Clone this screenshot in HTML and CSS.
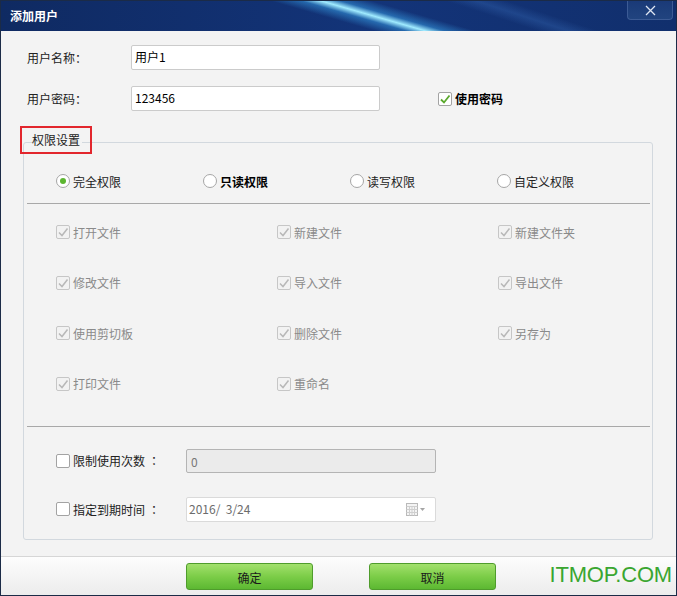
FILE: index.html
```html
<!DOCTYPE html>
<html lang="zh-CN">
<head>
    <meta charset="UTF-8">
    <title>添加用户</title>
    <link rel="stylesheet" href="styles.css">
</head>
<body>
    <div class="window">
        <div class="titlebar">
            <span class="title">添加用户</span>
            <button class="close-btn" aria-label="关闭">
                <svg width="11" height="11" viewBox="0 0 11 11"><path d="M1 1 L10 10 M10 1 L1 10" stroke="#dfe6f2" stroke-width="1.3" fill="none"/></svg>
            </button>
        </div>

        <div class="dialog-body">
            <div class="field-row">
                <span class="field-label">用户名称<span class="colon">：</span></span>
                <input class="text-input" type="text" value="用户1" readonly>
            </div>
            <div class="field-row">
                <span class="field-label">用户密码<span class="colon">：</span></span>
                <input class="text-input" type="text" value="123456" readonly>
                <label class="check check-strong use-pwd">
                    <span class="box"><svg width="12" height="12" viewBox="0 0 12 12"><path d="M2 6.5 L5 9.5 L10.5 2.5" stroke="#5aa92c" stroke-width="1.8" fill="none"/></svg></span>使用密码
                </label>
            </div>

            <div class="groupbox">
                <div class="group-title"><span>权限设置</span></div>

                <div class="radio-row">
                    <label class="radio"><span class="dot on"></span>完全权限</label>
                    <label class="radio radio-strong"><span class="dot"></span>只读权限</label>
                    <label class="radio"><span class="dot"></span>读写权限</label>
                    <label class="radio"><span class="dot"></span>自定义权限</label>
                </div>

                <div class="divider"></div>

                <div class="perm-grid" id="perm-grid"></div>

                <div class="divider divider-low"></div>

                <div class="limit-rows">
                    <div class="limit-row">
                        <label class="check limit-check"><span class="box"></span>限制使用次数<span class="colon">：</span></label>
                        <div class="text-box disabled-box">0</div>
                    </div>
                    <div class="limit-row limit-row-date">
                        <label class="check limit-check"><span class="box"></span>指定到期时间<span class="colon">：</span></label>
                        <div class="text-box date-box">
                            <span class="date-text">2016/  3/24</span>
                            <span class="date-picker">
                                <svg width="20" height="14" viewBox="0 0 20 14">
                                    <rect x="0.5" y="0.5" width="11" height="12" fill="#f4f4f4" stroke="#b9b9b9"/>
                                    <path d="M0.5 3.5 H11.5 M3.5 3.5 V12.5 M6 3.5 V12.5 M8.5 3.5 V12.5 M0.5 6.5 H11.5 M0.5 9.5 H11.5" stroke="#cfcfcf" stroke-width="1" fill="none"/>
                                    <path d="M14 5 H19 L16.5 8 Z" fill="#a5a5a5"/>
                                </svg>
                            </span>
                        </div>
                    </div>
                </div>
            </div>
        </div>

        <div class="footer">
            <button class="green-btn">确定</button>
            <button class="green-btn btn-cancel">取消</button>
            <span class="watermark">ITMOP.COM</span>
        </div>
    </div>

    <script>
        // permission checkboxes, all ticked and greyed out
        const perms = [
            '打开文件', '新建文件', '新建文件夹',
            '修改文件', '导入文件', '导出文件',
            '使用剪切板', '删除文件', '另存为',
            '打印文件', '重命名'
        ];

        const tick = '<svg width="12" height="12" viewBox="0 0 12 12"><path d="M2 6.5 L5 9.5 L10.5 2.5" stroke="#b8b8b8" stroke-width="1.5" fill="none"/></svg>';

        document.getElementById('perm-grid').innerHTML = perms.map(p => `
            <label class="check disabled"><span class="box">${tick}</span>${p}</label>
        `).join('');
    </script>
</body>
</html>
```

FILE: styles.css
```css
* {
    margin: 0;
    padding: 0;
    box-sizing: border-box;
}

body {
    font-family: "Noto Sans CJK SC", "Liberation Sans", sans-serif;
    font-size: 12px;
    color: #222;
    background: #fff;
}

.window {
    width: 677px;
    height: 596px;
    border: 1px solid #1b2b47;
    display: flex;
    flex-direction: column;
    background: #f3f3f3;
    overflow: hidden;
}

/* title bar */
.titlebar {
    height: 30px;
    flex-shrink: 0;
    display: flex;
    justify-content: space-between;
    align-items: flex-start;
    background:
        linear-gradient(16deg, transparent 48%, rgba(60, 170, 240, 0.45) 52%, rgba(160, 235, 255, 1) 54.5%, rgba(60, 170, 240, 0.45) 57%, transparent 61%),
        linear-gradient(18deg, transparent 70%, rgba(70, 130, 210, 0.25) 74%, transparent 78%),
        linear-gradient(to right, #0f2a62, #133479 55%, #112f6d);
}

.title {
    color: #fff;
    font-weight: bold;
    font-size: 12px;
    line-height: 30px;
    padding-left: 9px;
}

.close-btn {
    width: 46px;
    height: 19px;
    margin-right: 3px;
    border: 1px solid #3c5b95;
    border-top: none;
    border-radius: 0 0 4px 4px;
    background: linear-gradient(#1a3a78, #21447f);
    display: flex;
    align-items: center;
    justify-content: center;
}

/* body */
.dialog-body {
    flex: 1;
    padding: 14px 0 0 22px;
}

.field-row {
    display: flex;
    align-items: center;
    height: 25px;
    padding-left: 4px;
    margin-bottom: 16px;
}

.field-label {
    width: 104px;
    color: #222;
}

/* centred full-width colon, like the Windows font */
.colon {
    font-family: "Noto Sans CJK TC", "Noto Sans CJK SC", sans-serif;
}

.text-input {
    width: 249px;
    height: 25px;
    border: 1px solid #cbcbcb;
    border-radius: 2px;
    background: #fff;
    padding: 0 3px 2px;
    font-family: "Noto Sans CJK SC", "Liberation Sans", sans-serif;
    font-size: 12px;
    color: #000;
    outline: none;
}

.use-pwd {
    margin-left: 58px;
}

/* checkbox and radio */
.check,
.radio {
    display: flex;
    align-items: center;
    gap: 3px;
    white-space: nowrap;
}

.box {
    width: 14px;
    height: 14px;
    flex-shrink: 0;
    border: 1px solid #a3a3a3;
    border-radius: 2px;
    background: #fff;
    display: flex;
    align-items: center;
    justify-content: center;
}

.check-strong,
.radio-strong {
    font-weight: bold;
    color: #000;
}

.check.disabled {
    color: #8a8a8a;
}

.check.disabled .box {
    border-color: #c6c6c6;
    background: #f2f2f2;
}

.dot {
    width: 14px;
    height: 14px;
    border: 1px solid #a6a6a6;
    border-radius: 50%;
    background: #fff;
    display: flex;
    align-items: center;
    justify-content: center;
}

.dot.on::after {
    content: "";
    width: 6px;
    height: 6px;
    border-radius: 50%;
    background: #5cb630;
}

/* permission group */
.groupbox {
    position: relative;
    margin-top: 31px;
    width: 630px;
    border: 1px solid #d2d8de;
    border-radius: 3px;
    padding: 26px 2px 17px 3px;
}

.group-title {
    position: absolute;
    left: -4px;
    top: -17px;
    width: 72px;
    height: 28px;
    border: 2px solid #e2262d;
    padding-left: 10px;
    display: flex;
    align-items: center;
}

.group-title span {
    background: #f3f3f3;
    color: #222;
    line-height: 16px;
    padding-right: 2px;
}

.radio-row {
    display: grid;
    grid-template-columns: repeat(4, 147px);
    height: 24px;
    align-items: center;
    padding-left: 29px;
}

.divider {
    height: 1px;
    background: #a8a8a8;
    margin-top: 10px;
}

.divider-low {
    margin-top: 32px;
}

.perm-grid {
    display: grid;
    grid-template-columns: repeat(3, 221px);
    grid-auto-rows: 20px;
    row-gap: 30.67px;
    padding: 18px 0 0 29px;
    align-items: center;
}

.limit-rows {
    padding: 22px 0 0 29px;
}

.limit-row {
    display: flex;
    align-items: center;
    height: 24px;
}

.limit-row-date {
    height: 25px;
    margin-top: 24px;
}

.limit-check {
    width: 130px;
}

.text-box {
    width: 250px;
    height: 100%;
    border-radius: 2px;
    padding: 0 4px 2px;
    display: flex;
    align-items: center;
    color: #777;
}

.disabled-box {
    background: #ebebeb;
    border: 1px solid #b4b4b4;
    align-items: flex-start;
    padding-top: 3px;
}

.date-box {
    background: #fff;
    border: 1px solid #dadada;
    justify-content: space-between;
    padding-left: 2px;
    padding-right: 9px;
}

.date-text {
    white-space: pre;
    color: #6c6c6c;
}

.date-picker {
    display: flex;
    padding-top: 3px;
}

/* footer */
.footer {
    height: 39px;
    flex-shrink: 0;
    border-top: 1px solid #d6d6d6;
    background: linear-gradient(#fdfdfd, #ececec);
    display: flex;
    align-items: flex-start;
    padding: 6px 0 0 185px;
}

.green-btn {
    width: 127px;
    height: 27px;
    flex-shrink: 0;
    border: 1px solid #4f9c2c;
    border-radius: 3px;
    background: linear-gradient(#a2e06c, #7ccd48 50%, #5cb832);
    font-family: "Noto Sans CJK SC", "Liberation Sans", sans-serif;
    font-size: 12px;
    color: #1a1a1a;
    padding-top: 2px;
}

.btn-cancel {
    margin-left: 56px;
}

.watermark {
    margin-left: auto;
    margin-right: 4px;
    font-family: "Liberation Sans", sans-serif;
    font-size: 22px;
    line-height: 24px;
    letter-spacing: -0.2px;
    color: #3aa630;
    margin-top: 0;
    white-space: nowrap;
}
```
